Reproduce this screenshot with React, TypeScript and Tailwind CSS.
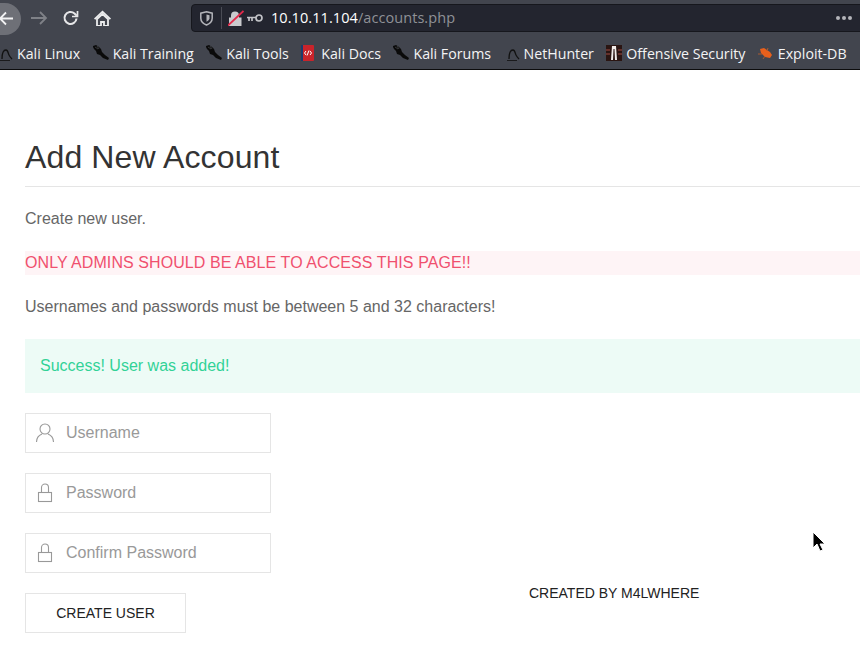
import React from "react";

function KaliIcon() {
  return (
    <svg width="16" height="16" viewBox="0 0 16 16" fill="none">
      <path d="M5 14C5 9 6 5 9 5c2 0 2 3 3 5 1 2 2 3 3 4" stroke="#111" strokeWidth="1.300" />
      <path d="M3 15.500h10" stroke="#1a1a1c" strokeWidth="1" />
    </svg>
  );
}

function SwordIcon() {
  return (
    <svg width="17" height="16" viewBox="0 0 17 16">
      <path d="M0 1l3-1 3 2 2 2 1 3 3 3 4 3-1 2-5-2-3-3-3-1-1-3-2-2-1-2z" fill="#0a0a0a" />
      <path d="M2 2l3 2M4 1l2 3" stroke="#55575d" strokeWidth="0.600" />
    </svg>
  );
}

function DocsIcon() {
  return (
    <svg width="14" height="16" viewBox="0 0 14 16">
      <rect x="0" y="0" width="13" height="16" rx="1" fill="#c9242b" />
      <rect x="0" y="0" width="2" height="16" fill="#1c3c6e" />
      <path d="M5 6L3.500 8 5 10M9 6l1.500 2L9 10M8 5.500L6 10.500" stroke="#fff" strokeWidth="1" fill="none" />
    </svg>
  );
}

function OffsecIcon() {
  return (
    <svg width="16" height="16" viewBox="0 0 16 16">
      <rect width="16" height="16" fill="#2a1512" />
      <path d="M6 1h4l1 14H9L8.500 4h-1L7 15H5z" fill="#f1ecea" />
      <path d="M0 5h4M0 9h4M12 5h4M12 9h4" stroke="#7a3a34" strokeWidth="1.500" />
    </svg>
  );
}

function BugIcon() {
  return (
    <svg width="16" height="16" viewBox="0 0 16 16">
      <path d="M2 4l4-1 6 4 2 3-2 3-5-1-4-4z" fill="#e8601c" />
      <path d="M0 9h4M5 14l2-3M10 3l-1 3" stroke="#a85a30" strokeWidth="1" />
    </svg>
  );
}

const bookmarks = [
  { label: "Kali Linux", icon: <KaliIcon /> },
  { label: "Kali Training", icon: <SwordIcon /> },
  { label: "Kali Tools", icon: <SwordIcon /> },
  { label: "Kali Docs", icon: <DocsIcon /> },
  { label: "Kali Forums", icon: <SwordIcon /> },
  { label: "NetHunter", icon: <KaliIcon /> },
  { label: "Offensive Security", icon: <OffsecIcon /> },
  { label: "Exploit-DB", icon: <BugIcon /> },
];

function Toolbar() {
  return (
    <div className="h-[70px] bg-[#42454e] border-b border-[#0c0c0d] overflow-hidden font-['Open_Sans','Noto_Sans',sans-serif]">
      <div className="h-9 flex items-center">
        {/* back button sits half off the window */}
        <div className="w-[39px] h-[32px] -ml-[18px] mt-[1px] rounded-full bg-[#6e7077] flex items-center justify-end pr-[7px] flex-none">
          <svg width="15" height="15" viewBox="0 0 15 15" fill="none" stroke="#f2f2f3" strokeWidth="1.800" className="flex-none">
            <path d="M14 7.500H1M7 1.500l-6 6 6 6" />
          </svg>
        </div>
        <svg width="18" height="16" viewBox="0 0 18 16" fill="none" stroke="#7f8187" strokeWidth="1.800" className="ml-[9px] flex-none">
          <path d="M1 8h14M10 2l6 6-6 6" />
        </svg>
        <svg width="17" height="16" viewBox="0 0 17 16" fill="none" stroke="#e6e6e8" strokeWidth="2.100" className="ml-[14px] flex-none">
          <path d="M14.500 8.500a6 6 0 1 1-2-5L14.800 5.800" />
          <path d="M15.500 1v5.500H10" strokeWidth="1.700" />
        </svg>
        <svg width="17" height="16" viewBox="0 0 17 16" className="ml-[15px] flex-none">
          <path d="M8.500 0.500L17 8.500l-1.200 1.300L8.500 3 1.200 9.800 0 8.500z" fill="#ecedee" />
          <path d="M3 9l5.500-5L14 9v7H10v-4H7v4H3z" fill="none" stroke="#ecedee" strokeWidth="1.800" />
        </svg>
        <div className="ml-[80px] self-start mt-[4px] w-[670px] flex-none h-[28px] rounded-l-[4px] bg-[#23252f] border border-[#16171d] flex items-center">
          <svg width="13" height="15" viewBox="0 0 13 15" className="ml-2 flex-none">
            <path d="M6.500 0.800l5.700 1.400v5c0 3-2.700 5.500-5.700 6.800-3-1.300-5.700-3.800-5.700-6.800v-5z" fill="none" stroke="#b4b5ba" strokeWidth="1.500" />
            <path d="M6.500 3.500l3 0.700v3c0 1.500-1.500 2.800-3 3.500z" fill="#b4b5ba" />
          </svg>
          <div className="w-px h-[22px] bg-[#4a4c55] ml-2 flex-none" />
          <svg width="16" height="16" viewBox="0 0 16 16" className="ml-[6px] flex-none">
            <path d="M3 7.500V5.500a4 4 0 0 1 8 0v2h2.500V16H1V7.500z" fill="#c9cacd" />
            <path d="M0 15.500L15.500 1" stroke="#e3294a" strokeWidth="1.800" />
          </svg>
          <svg width="16" height="8" viewBox="0 0 16 8" fill="none" stroke="#c2c3c7" strokeWidth="1.700" className="ml-[3px] flex-none">
            <circle cx="12" cy="4" r="3" />
            <path d="M9 3.500H0M2 3.500V7M5 3.500V7" />
          </svg>
          <span className="ml-2 text-[14.5px] tracking-[0.07px] text-white whitespace-nowrap">
            10.10.11.104<span className="text-[#8f9197]">/accounts.php</span>
          </span>
          <div className="ml-auto mr-2 flex gap-[2px]">
            <span className="w-1 h-1 rounded-full bg-[#b4b5ba]" />
            <span className="w-1 h-1 rounded-full bg-[#b4b5ba]" />
            <span className="w-1 h-1 rounded-full bg-[#b4b5ba]" />
          </div>
        </div>
      </div>
      <div className="h-[33px] pt-[2px] flex items-center whitespace-nowrap text-[14.2px] text-[#f4f4f5]">
        <div className="-ml-[3px] flex items-center">
          {bookmarks.map((b) => (
            <span key={b.label} className="flex items-center gap-1 mr-[12.4px]">
              <span className="w-4 h-4 flex-none -mt-[1px]">{b.icon}</span>
              <span>{b.label}</span>
            </span>
          ))}
        </div>
      </div>
    </div>
  );
}

function UserIcon() {
  return (
    <svg width="20" height="20" viewBox="0 0 20 20" fill="none" stroke="#999" strokeWidth="1.100">
      <circle cx="10" cy="6" r="5" />
      <path d="M1.500 19c0-4.500 3-7 5.500-8M18.500 19c0-4.500-3-7-5.500-8" />
    </svg>
  );
}

function LockIcon() {
  return (
    <svg width="20" height="20" viewBox="0 0 20 20" fill="none" stroke="#999" strokeWidth="1.100">
      <rect x="3.500" y="9.500" width="13" height="9" />
      <path d="M6.500 9.500V4.500a3.500 3.500 0 0 1 7 0v5" />
    </svg>
  );
}

function Field({ icon, placeholder }: { icon: React.ReactNode; placeholder: string }) {
  return (
    <div className="w-[246px] h-10 border border-[#e5e5e5] flex items-center pl-[9px] bg-white">
      {icon}
      <span className="ml-[11px] text-[16px] text-[#999]">{placeholder}</span>
    </div>
  );
}

export default function App() {
  return (
    <div className="relative w-[860px] h-[661px] overflow-hidden bg-white font-['Liberation_Sans',Arial,sans-serif] text-[16px] text-[#666]">
      <Toolbar />
      <div className="pl-[25px]">
        {/* Title */}
        <h1 className="mt-[67px] h-[50px] border-b border-[#e5e5e5] text-[32px] leading-[40px] tracking-[0.13px] text-[#333]">
          Add New Account
        </h1>
        <p className="mt-[20px] leading-[24px]">Create new user.</p>
        <p className="mt-[20px] leading-[24px] bg-[#fef4f6] text-[#f0506e] tracking-[0.08px]">
          ONLY ADMINS SHOULD BE ABLE TO ACCESS THIS PAGE!!
        </p>
        <p className="mt-[20px] leading-[24px]">
          Usernames and passwords must be between 5 and 32 characters!
        </p>
        <div className="mt-[20px] h-[54px] bg-[#edfbf6] text-[#32d296] pl-[15px] flex items-center">
          Success! User was added!
        </div>
        <div className="mt-[20px] flex flex-col gap-5">
          <Field icon={<UserIcon />} placeholder="Username" />
          <Field icon={<LockIcon />} placeholder="Password" />
          <Field icon={<LockIcon />} placeholder="Confirm Password" />
        </div>
        <div className="mt-[20px] flex items-start">
          <button className="w-[161px] h-10 border border-[#e5e5e5] text-[14px] text-[#222] bg-white">
            CREATE USER
          </button>
          <span className="ml-[343px] mt-[-10px] text-[14px] leading-[20px] text-[#222]">
            CREATED BY M4LWHERE
          </span>
        </div>
      </div>
      {/* mouse pointer */}
      <svg width="15" height="22" viewBox="0 0 15 22" className="absolute left-[811px] top-[531px]">
        <path d="M2 1v16l4-4 3 7 3-1-3-6h5z" fill="#000" stroke="#fff" strokeWidth="1" />
      </svg>
    </div>
  );
}
